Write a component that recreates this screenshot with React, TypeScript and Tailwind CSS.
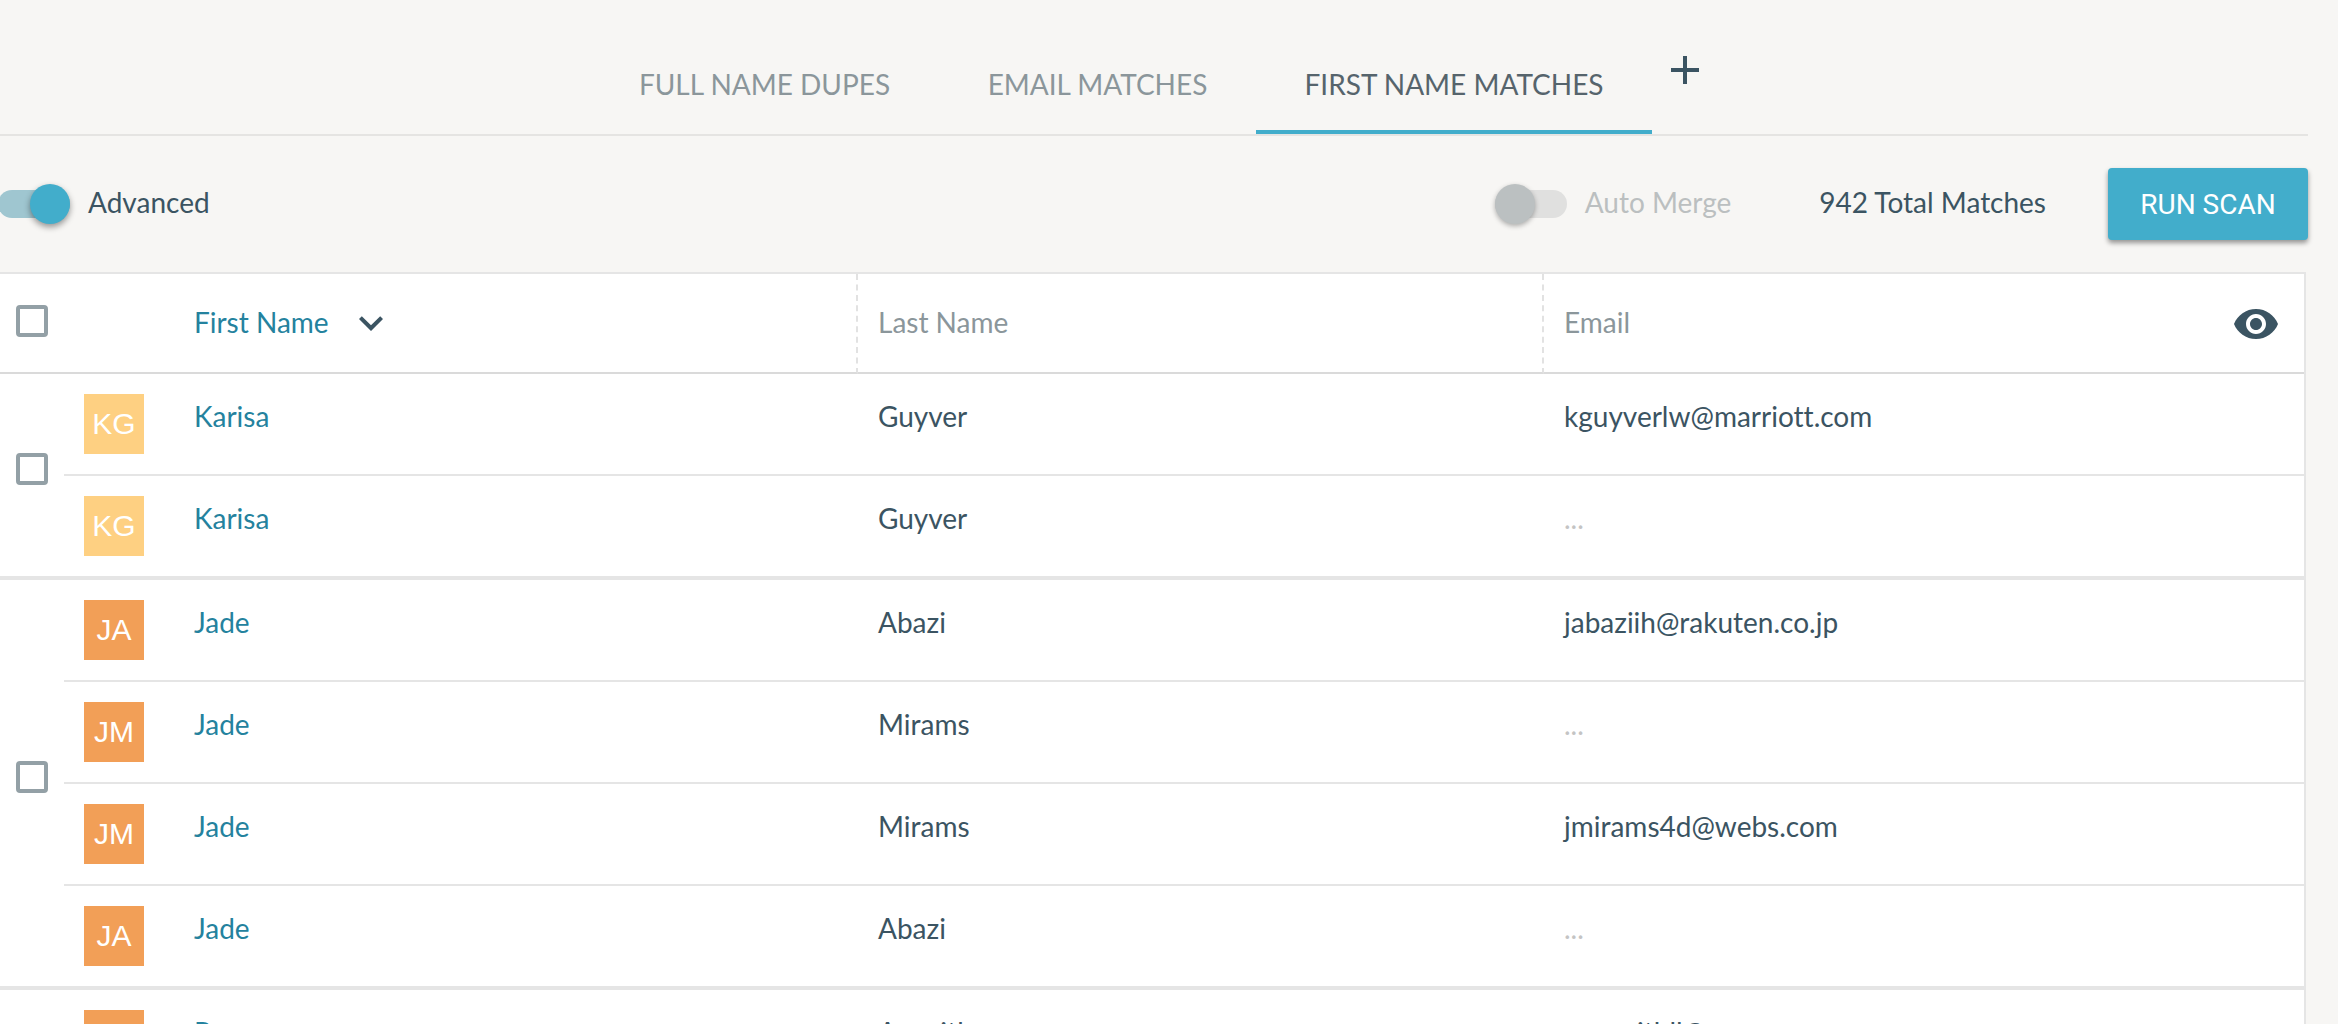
import { MdAdd, MdExpandMore, MdVisibility } from "react-icons/md";

type Person = { initials: string; first: string; last: string; email?: string };

const groups: { tone: string; people: Person[] }[] = [
  {
    tone: "bg-[#fed082]",
    people: [
      { initials: "KG", first: "Karisa", last: "Guyver", email: "kguyverlw@marriott.com" },
      { initials: "KG", first: "Karisa", last: "Guyver" },
    ],
  },
  {
    tone: "bg-[#f29f57]",
    people: [
      { initials: "JA", first: "Jade", last: "Abazi", email: "jabaziih@rakuten.co.jp" },
      { initials: "JM", first: "Jade", last: "Mirams" },
      { initials: "JM", first: "Jade", last: "Mirams", email: "jmirams4d@webs.com" },
      { initials: "JA", first: "Jade", last: "Abazi" },
    ],
  },
  {
    tone: "bg-[#f29f57]",
    people: [
      { initials: "PA", first: "Percy", last: "Asquith", email: "pasquithll@usa.gov" },
      { initials: "PA", first: "Percy", last: "Asquith" },
    ],
  },
];

function Box({ label }: { label: string }) {
  return (
    <input
      type="checkbox"
      aria-label={label}
      className="block size-8 appearance-none rounded-sm border-4 border-[#93a0a6] bg-white checked:bg-[#42adcb]"
    />
  );
}

function Toggle({ label, on, muted }: { label: string; on?: boolean; muted?: boolean }) {
  return (
    <label className={muted ? "flex items-center gap-[18px] text-[#bbbfc0]" : "-ml-0.5 flex items-center gap-[18px]"}>
      <input type="checkbox" role="switch" defaultChecked={on} disabled={muted} className="peer sr-only" />
      <span className="flex h-7 w-[72px] items-center rounded-full bg-[#e0e0df] peer-checked:justify-end peer-checked:bg-[#9fc6d0]">
        <span
          className={
            muted
              ? "size-10 rounded-full bg-[#bbc0c1] shadow-[0_2px_5px_rgba(0,0,0,0.3)]"
              : "size-10 rounded-full bg-[#42adcb] shadow-[0_3px_6px_rgba(0,0,0,0.4)]"
          }
        />
      </span>
      <span className="pb-1">{label}</span>
    </label>
  );
}

const tabBase = "h-[134px] cursor-pointer border-b-4 pt-[38px]";

export default function App() {
  return (
    <div className="h-screen overflow-hidden bg-[#f7f6f4] pr-[30px] font-['Lato',sans-serif] text-[28px] leading-9 text-[#3b5462] [font-variant-ligatures:none]">
      <nav className="flex justify-center border-b-2 border-[#e5e4e2]">
        <button className={`${tabBase} w-[349px] border-transparent text-[#8b969b]`}>FULL NAME DUPES</button>
        <button className={`${tabBase} w-[317px] border-transparent text-[#8b969b]`}>EMAIL MATCHES</button>
        <button className={`${tabBase} w-[396px] border-[#42adcb] text-[#56646c]`}>FIRST NAME MATCHES</button>
        <button aria-label="Add tab" className="mt-[46px] flex w-[66px] justify-center self-start">
          <MdAdd className="size-12" />
        </button>
      </nav>

      <div className="flex h-[136px] items-center justify-between">
        <Toggle label="Advanced" on />
        <div className="flex items-center">
          <Toggle label="Auto Merge" muted />
          <span className="mr-[62px] ml-[88px] pb-1">942 Total Matches</span>
          <button className="h-[72px] w-[200px] rounded-sm bg-[#42adcb] pt-0.5 font-['Roboto',sans-serif] text-white shadow-[0_3px_5px_rgba(0,0,0,0.4)]">
            RUN SCAN
          </button>
        </div>
      </div>

      <div className="mr-0.5 border-t-2 border-r-2 border-[#e5e5e5] bg-white">
        <table className="w-full table-fixed border-separate border-spacing-0 text-left">
          <colgroup>
            <col className="w-16" />
            <col className="w-[108px]" />
            <col className="w-[686px]" />
            <col className="w-[686px]" />
            <col />
          </colgroup>
          <thead>
            <tr className="h-[100px] *:border-b-2 *:border-b-[#dadada] *:font-normal">
              <th className="pb-1 pl-4">
                <Box label="Select all" />
              </th>
              <th />
              <th className="border-r-2 border-r-[#e2e2e2] pl-[22px] text-[#24829e] [border-right-style:dashed]">
                <button className="flex items-center gap-[18px]">
                  <span className="pb-0.5">First Name</span>
                  <MdExpandMore className="size-12 text-[#3b5462]" />
                </button>
              </th>
              <th className="border-r-2 border-r-[#e2e2e2] pb-0.5 pl-5 text-[#8b969b] [border-right-style:dashed]">
                Last Name
              </th>
              <th className="pl-5 text-[#8b969b]">
                <div className="flex items-center justify-between pr-6">
                  <span className="pb-0.5">Email</span>
                  <button aria-label="Show columns" className="pt-0.5 text-[#3b5462]">
                    <MdVisibility className="size-12" />
                  </button>
                </div>
              </th>
            </tr>
          </thead>
          {groups.map((group, g) => (
            <tbody key={g}>
              {group.people.map((p, i) => {
                const last = i === group.people.length - 1;
                return (
                  <tr
                    key={i}
                    className={
                      last
                        ? "h-[104px] align-top *:border-b-4 *:border-[#e5e5e5]"
                        : "h-[102px] align-top *:border-b-2 *:border-[#e5e5e5]"
                    }
                  >
                    {i === 0 && (
                      <td rowSpan={group.people.length} className="border-b-4! pb-3 pl-4 align-middle">
                        <Box label={`Select ${p.first} matches`} />
                      </td>
                    )}
                    <td className="pt-5 pl-5">
                      <div
                        className={`${group.tone} flex size-[60px] items-center justify-center font-['Liberation_Sans',sans-serif] text-[30px] text-white`}
                      >
                        {p.initials}
                      </div>
                    </td>
                    <td className="pt-6 pl-[22px]">
                      <a href="#person" className="text-[#24829e]">
                        {p.first}
                      </a>
                    </td>
                    <td className="pt-6 pl-5">{p.last}</td>
                    <td className="pt-6 pl-5">{p.email ?? <span className="text-[#c4c4c4]">...</span>}</td>
                  </tr>
                );
              })}
            </tbody>
          ))}
        </table>
      </div>
    </div>
  );
}
